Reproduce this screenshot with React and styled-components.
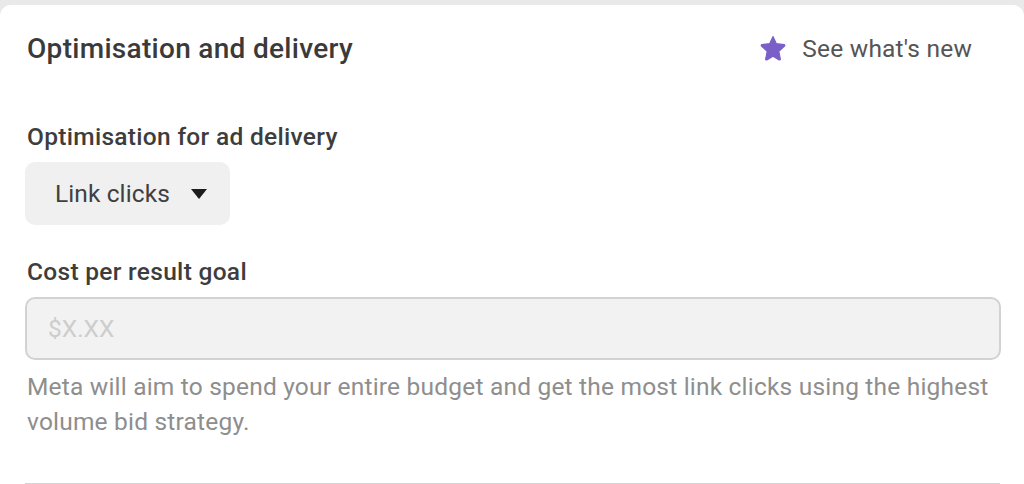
import styled, { createGlobalStyle } from "styled-components";

const GlobalStyle = createGlobalStyle`
  html, body {
    margin: 0;
    padding: 0;
    background: #e9e9e9;
  }
  body {
    font-family: Roboto, "Liberation Sans", Arial, sans-serif;
  }
`;

const StarIcon = () => (
  <svg width="28" height="28" viewBox="0 0 24 24" aria-hidden="true">
    <path
      d="M12 2.2l2.9 6.1 6.6.8c.6.1.8.8.4 1.2l-4.9 4.6 1.3 6.6c.1.6-.5 1-1 .7L12 19l-5.3 3.2c-.5.3-1.1-.1-1-.7l1.3-6.6-4.9-4.6c-.4-.4-.2-1.1.4-1.2l6.6-.8L12 2.2z"
      fill="#7b5fc9"
      stroke="#7b5fc9"
      strokeWidth="1"
      strokeLinejoin="round"
    />
  </svg>
);

const App = () => (
  <Page>
    <GlobalStyle />
    <Card>
      <Header>
        <Title>Optimisation and delivery</Title>
        <NewsLink>
          <StarIcon />
          See what's new
        </NewsLink>
      </Header>

      <Field $gap="53px">
        <Label>Optimisation for ad delivery</Label>
        <Dropdown>
          Link clicks
          <Caret />
        </Dropdown>
      </Field>

      <Field $gap="29px">
        <Label>Cost per result goal</Label>
        <Input placeholder="$X.XX" />
        <Help>
          Meta will aim to spend your entire budget and get the most link
          clicks using the highest volume bid strategy.
        </Help>
      </Field>

      <Divider />
    </Card>
  </Page>
);

export default App;

const Page = styled.div`
  padding-top: 5px;
  height: 484px;
  box-sizing: border-box;
  overflow: hidden;
`;

const Card = styled.section`
  background: #fff;
  border-radius: 11px 11px 0 0;
  padding: 25px 23px 0 25px;
  min-height: 479px;
  box-sizing: border-box;
`;

const Header = styled.div`
  display: flex;
  align-items: center;
  justify-content: space-between;
`;

const Title = styled.h2`
  margin: 0 0 0 2px;
  font-size: 28px;
  line-height: 35px;
  font-weight: 500;
  letter-spacing: 0.3px;
  color: #3a3a3a;
  padding-top: 1px;
`;

const NewsLink = styled.button`
  display: flex;
  align-items: center;
  gap: 15px;
  background: none;
  border: none;
  padding: 0 29px 0 0;
  font-family: inherit;
  font-size: 24.5px;
  line-height: 35px;
  letter-spacing: 0.2px;
  color: #555;
  cursor: pointer;
`;

const Field = styled.div`
  display: flex;
  flex-direction: column;
  align-items: flex-start;
  margin-top: ${(p) => p.$gap};
`;

const Label = styled.label`
  margin: 0 0 8px 2px;
  font-size: 24.5px;
  line-height: 35px;
  font-weight: 500;
  letter-spacing: 0.3px;
  color: #3d3d3d;
`;

const Dropdown = styled.button`
  display: flex;
  align-items: center;
  gap: 21px;
  height: 63px;
  padding: 0 23px 0 30px;
  border: none;
  border-radius: 10px;
  background: #f0f0f0;
  font-family: inherit;
  font-size: 24.5px;
  letter-spacing: 0.1px;
  color: #404040;
  cursor: pointer;
`;

const Caret = styled.span`
  width: 0;
  height: 0;
  border-left: 8.5px solid transparent;
  border-right: 8.5px solid transparent;
  border-top: 10px solid #1c1c1c;
  margin-top: 1px;
`;

const Input = styled.input`
  width: 100%;
  height: 63px;
  box-sizing: border-box;
  padding: 0 21px;
  border: 2px solid #d2d2d2;
  border-radius: 10px;
  background: #f2f2f2;
  font-family: inherit;
  font-size: 24.5px;
  color: #333;
  outline: none;

  &::placeholder {
    color: #cdcdcd;
  }
`;

const Help = styled.p`
  margin: 9px 0 0 2px;
  font-size: 24.5px;
  line-height: 35px;
  letter-spacing: 0.2px;
  color: #8e8e8e;
`;

const Divider = styled.div`
  height: 2px;
  background: #d4d4d4;
  margin: 44px 0 0 0;
  width: 975px;
`;
